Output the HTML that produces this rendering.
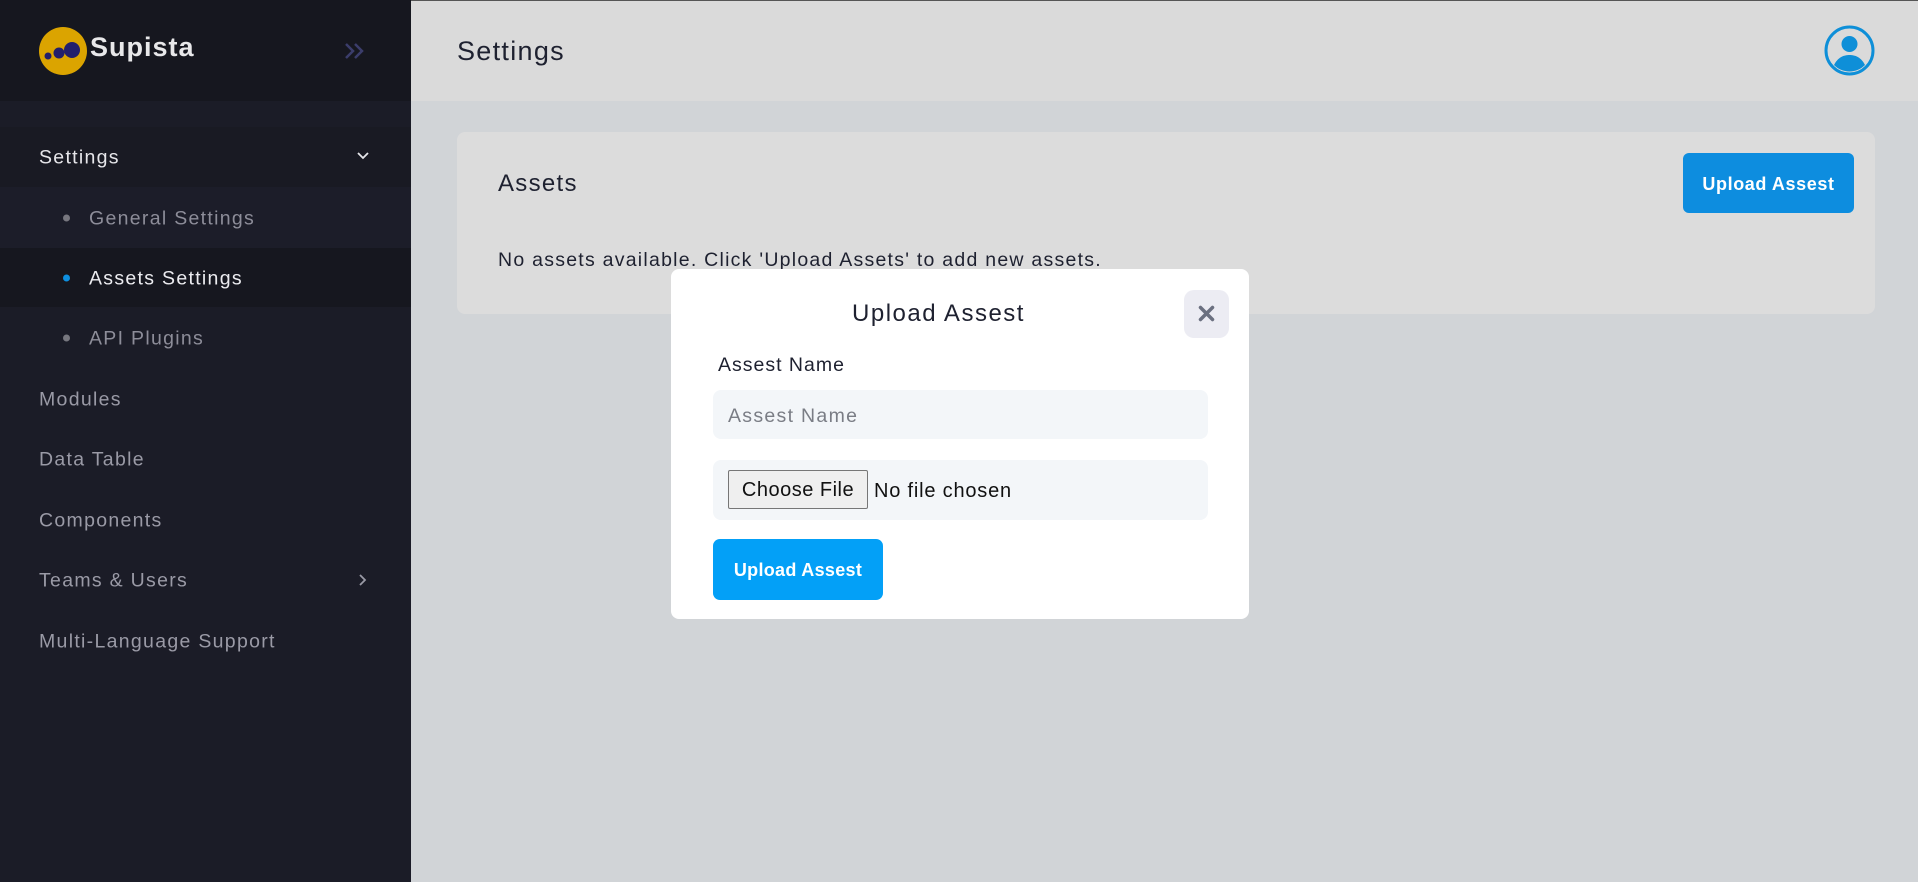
<!DOCTYPE html>
<html><head><meta charset="utf-8"><style>
*{box-sizing:border-box;margin:0;padding:0}
body{width:1918px;height:882px;overflow:hidden;position:relative;font-family:"Liberation Sans",sans-serif;background:#d1d4d7;letter-spacing:1.3px}
.sb{position:absolute;left:0;top:0;width:411px;height:882px;background:#1b1c27;border-top:1px solid #555}
.sbh{position:absolute;left:0;top:0;width:411px;height:101px;background:#16171f}
.abs{position:absolute}
.it{position:absolute;left:39px;font-size:19.5px;color:#9a9aa6;transform:translateY(-45%)}
.sub{position:absolute;left:89px;font-size:19.5px;color:#8d8d99;transform:translateY(-45%)}
.dot{position:absolute;left:63px;width:7px;height:7px;border-radius:50%;background:#77777f;transform:translateY(-50%)}
.main-h{position:absolute;left:411px;top:0;width:1507px;height:101px;background:#dadada;border-top:1px solid #555}
</style></head><body>
<div class="sb"></div>
<div class="sbh"></div>
<svg class="abs" style="left:38px;top:26px" width="50" height="50" viewBox="0 0 50 50">
<circle cx="25" cy="25" r="24" fill="#dba400"/>
<circle cx="34" cy="24" r="8" fill="#231f6b"/>
<circle cx="21" cy="27" r="5.5" fill="#231f6b"/>
<circle cx="10" cy="30" r="3.5" fill="#231f6b"/>
</svg>
<div class="abs" style="left:90px;top:32px;font-size:27px;font-weight:bold;color:#e8e8ea;letter-spacing:1px">Supista</div>
<svg class="abs" style="left:344px;top:42px" width="22" height="18" viewBox="0 0 22 18"><path d="M2 2l7 7-7 7M11 2l7 7-7 7" fill="none" stroke="#3b3d6b" stroke-width="2.5"/></svg>
<div class="abs" style="left:0;top:127px;width:411px;height:60px;background:#191a23"></div>
<div class="abs" style="left:0;top:187px;width:411px;height:61px;background:#1c1d29"></div>
<div class="abs" style="left:0;top:248px;width:411px;height:59px;background:#16171f"></div>
<div class="it" style="top:157px;color:#e6e6ea">Settings</div>
<svg class="abs" style="left:356px;top:151px" width="14" height="10" viewBox="0 0 14 10"><path d="M2 2l5 5 5-5" fill="none" stroke="#e6e6ea" stroke-width="1.8"/></svg>
<div class="dot" style="top:218px"></div><div class="sub" style="top:218px">General Settings</div>
<div class="dot" style="top:278px;background:#0e8fe0"></div><div class="sub" style="top:278px;color:#ececf0">Assets Settings</div>
<div class="dot" style="top:338px"></div><div class="sub" style="top:338px">API Plugins</div>
<div class="it" style="top:399px">Modules</div>
<div class="it" style="top:459px">Data Table</div>
<div class="it" style="top:520px">Components</div>
<div class="it" style="top:580px">Teams &amp; Users</div>
<svg class="abs" style="left:358px;top:573px" width="10" height="14" viewBox="0 0 10 14"><path d="M2 2l5 5-5 5" fill="none" stroke="#9a9aa6" stroke-width="1.8"/></svg>
<div class="it" style="top:641px">Multi-Language Support</div>

<div class="main-h"></div>
<div class="abs" style="left:457px;top:36px;font-size:27px;color:#1e2130">Settings</div>
<svg class="abs" style="left:1824px;top:25px" width="51" height="51" viewBox="0 0 51 51">
<circle cx="25.5" cy="25.5" r="23.5" fill="none" stroke="#0e8fd8" stroke-width="3"/>
<circle cx="25.5" cy="19" r="8" fill="#0e8fd8"/>
<path d="M10 40c4-8 10-10 15.5-10s11.5 2 15.5 10c-4 4-9.5 6.5-15.5 6.5S14 44 10 40z" fill="#0e8fd8"/>
</svg>
<div class="abs" style="left:457px;top:132px;width:1418px;height:182px;background:#dcdcdc;border-radius:8px"></div>
<div class="abs" style="left:498px;top:170px;font-size:24px;color:#1e2130">Assets</div>
<div class="abs" style="left:1683px;top:153px;width:171px;height:60px;background:#0d8ddf;border-radius:6px;color:#fff;font-weight:bold;font-size:18px;line-height:62px;text-align:center;letter-spacing:0.6px">Upload Assest</div>
<div class="abs" style="left:498px;top:249px;font-size:19.5px;color:#1e2130;letter-spacing:1.25px">No assets available. Click 'Upload Assets' to add new assets.</div>

<div class="abs" style="left:671px;top:269px;width:578px;height:350px;background:#fff;border-radius:8px"></div>
<div class="abs" style="left:671px;top:300px;width:535px;text-align:center;font-size:24px;color:#1e2130;letter-spacing:1.5px">Upload Assest</div>
<div class="abs" style="left:1184px;top:290px;width:45px;height:48px;background:#ececf3;border-radius:10px"></div>
<svg class="abs" style="left:1198px;top:305px" width="17" height="17" viewBox="0 0 17 17"><path d="M2.5 2.5l12 12M14.5 2.5l-12 12" stroke="#6b7080" stroke-width="3.5" stroke-linecap="round"/></svg>
<div class="abs" style="left:718px;top:354px;font-size:19.5px;color:#1e2130;letter-spacing:1px">Assest Name</div>
<div class="abs" style="left:713px;top:390px;width:495px;height:49px;background:#f3f6f9;border-radius:8px"></div>
<div class="abs" style="left:728px;top:405px;font-size:19.5px;color:#7a7d85">Assest Name</div>
<div class="abs" style="left:713px;top:460px;width:495px;height:60px;background:#f3f6f9;border-radius:8px"></div>
<div class="abs" style="left:728px;top:470px;width:140px;height:39px;background:#efefef;border:1px solid #767676;border-radius:2px;font-size:20px;color:#111;line-height:39px;text-align:center;letter-spacing:0.5px">Choose File</div>
<div class="abs" style="left:874px;top:480px;font-size:20px;color:#111;letter-spacing:0.8px">No file chosen</div>
<div class="abs" style="left:713px;top:539px;width:170px;height:61px;background:#03a0f7;border-radius:7px;color:#fff;font-weight:bold;font-size:18px;line-height:63px;text-align:center;letter-spacing:0.3px">Upload Assest</div>
</body></html>
